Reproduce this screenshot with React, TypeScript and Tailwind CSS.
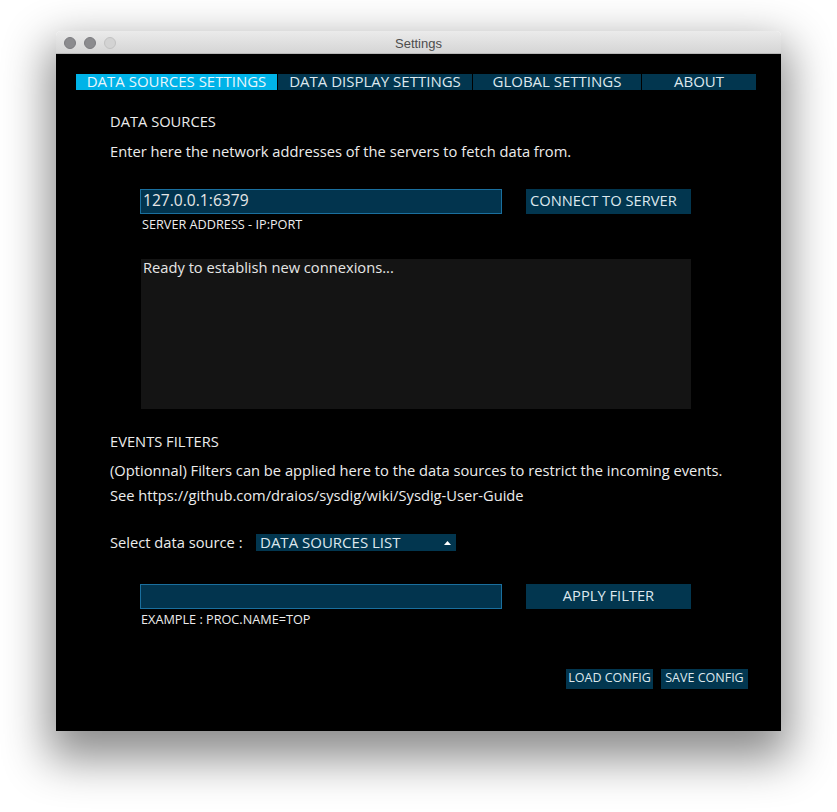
import React from 'react';

const tabs = [
    { label: 'DATA SOURCES SETTINGS', width: 'w-[201px]', active: true },
    { label: 'DATA DISPLAY SETTINGS', width: 'w-[194px]', active: false },
    { label: 'GLOBAL SETTINGS', width: 'w-[168px]', active: false },
    { label: 'ABOUT', width: 'w-[114px]', active: false },
];

const App: React.FC = () => {
    return (
        <div className="min-h-[812px] w-[837px] bg-white pt-[31px] pl-[56px]" style={{ fontFamily: '"Open Sans", "Noto Sans", sans-serif' }}>
            <div className="w-[725px] h-[700px] rounded-t-[5px] overflow-hidden flex flex-col shadow-[0_20px_45px_8px_rgba(0,0,0,0.45)]">
                {/* Barre de titre */}
                <div className="h-[23px] relative flex items-center justify-center pt-[3px] bg-gradient-to-b from-[#ebebeb] to-[#d5d5d5] border-b border-[#b8b8b8]">
                    <div className="absolute left-[8px] top-[6px] flex gap-[8px]">
                        <span className="w-[12px] h-[12px] rounded-full bg-[#8b8b8e] border border-[#7c7c80]" />
                        <span className="w-[12px] h-[12px] rounded-full bg-[#8b8b8e] border border-[#7c7c80]" />
                        <span className="w-[12px] h-[12px] rounded-full bg-[#d3d3d3] border border-[#c2c2c2]" />
                    </div>
                    <span className="text-[13px] text-[#4d4d4d]" style={{ fontFamily: '"Liberation Sans", Arial, sans-serif' }}>Settings</span>
                </div>

                {/* Contenu */}
                <div className="flex-1 bg-black pt-[20px] pl-[20px] text-[#ececec]">
                    <div className="flex gap-[1px] h-[16px]">
                        {tabs.map((t) => (
                            <div
                                key={t.label}
                                className={`${t.width} ${t.active ? 'bg-[#00b3e8] text-[#e8f6fc]' : 'bg-[#02364f] text-[#dde8ee]'} h-[16px] flex items-center justify-center pb-[1px] text-[15px] leading-[15px]`}
                            >
                                {t.label}
                            </div>
                        ))}
                    </div>

                    <div className="pl-[34px] pr-[33px]">
                        <div className="mt-[21px] h-[20px] leading-[20px] text-[14.7px]">DATA SOURCES</div>
                        <div className="mt-[10px] h-[20px] leading-[20px] text-[14.7px]">Enter here the network addresses of the servers to fetch data from.</div>

                        <div className="mt-[28px] ml-[30px] flex h-[25px]">
                            <div className="w-[362px] h-[25px] bg-[#02344e] border border-[#1a6f9e] flex items-center pl-[2px] pb-[1px] text-[15.6px] text-[#e6e6e6]">127.0.0.1:6379</div>
                            <div className="ml-[24px] w-[165px] h-[25px] bg-[#02364f] flex items-center pl-[4px] pb-[2px] text-[14.7px] text-[#dde8ee]">CONNECT TO SERVER</div>
                        </div>
                        <div className="mt-[2px] ml-[32px] h-[17px] leading-[17px] text-[12.7px]">SERVER ADDRESS - IP:PORT</div>

                        <div className="mt-[26px] ml-[31px] w-[550px] h-[150px] bg-[#141414] pl-[2px] text-[14.7px] leading-[16px] text-[#e6e6e6]">
                            Ready to establish new connexions...
                        </div>

                        <div className="mt-[22px] h-[20px] leading-[20px] text-[14.7px]">EVENTS FILTERS</div>
                        <div className="mt-[7px] text-[14.7px] leading-[25px]">
                            <div>(Optionnal) Filters can be applied here to the data sources to restrict the incoming events.</div>
                            <div>See https://github.com/draios/sysdig/wiki/Sysdig-User-Guide</div>
                        </div>

                        <div className="mt-[26px] flex items-center h-[17px]">
                            <span className="text-[14.7px] w-[146px] leading-[17px]">Select data source :</span>
                            <div className="w-[200px] h-[17px] bg-[#02364f] flex items-center pl-[4px] pr-[5px] text-[15px] leading-[17px] text-[#dde8ee]">
                                <span className="flex-1">DATA SOURCES LIST</span>
                                <svg width="7" height="4" viewBox="0 0 7 4"><path d="M0 4 L3.5 0 L7 4 Z" fill="#ffffff" /></svg>
                            </div>
                        </div>

                        <div className="mt-[33px] ml-[30px] flex h-[25px]">
                            <div className="w-[362px] h-[25px] bg-[#02344e] border border-[#1a6f9e]" />
                            <div className="ml-[24px] w-[165px] h-[25px] bg-[#02364f] flex items-center justify-center pb-[2px] text-[14.7px] text-[#dde8ee]">APPLY FILTER</div>
                        </div>
                        <div className="mt-[2px] ml-[31px] h-[17px] leading-[17px] text-[12.7px]">EXAMPLE : PROC.NAME=TOP</div>

                        <div className="mt-[41px] flex justify-end gap-[8px]">
                            <div className="w-[87px] h-[20px] bg-[#02364f] flex items-center justify-center pb-[1px] text-[12.5px] text-[#dde8ee]">LOAD CONFIG</div>
                            <div className="w-[87px] h-[20px] bg-[#02364f] flex items-center justify-center pb-[1px] text-[12.5px] text-[#dde8ee]">SAVE CONFIG</div>
                        </div>
                    </div>
                </div>
            </div>
        </div>
    );
};

export default App;
